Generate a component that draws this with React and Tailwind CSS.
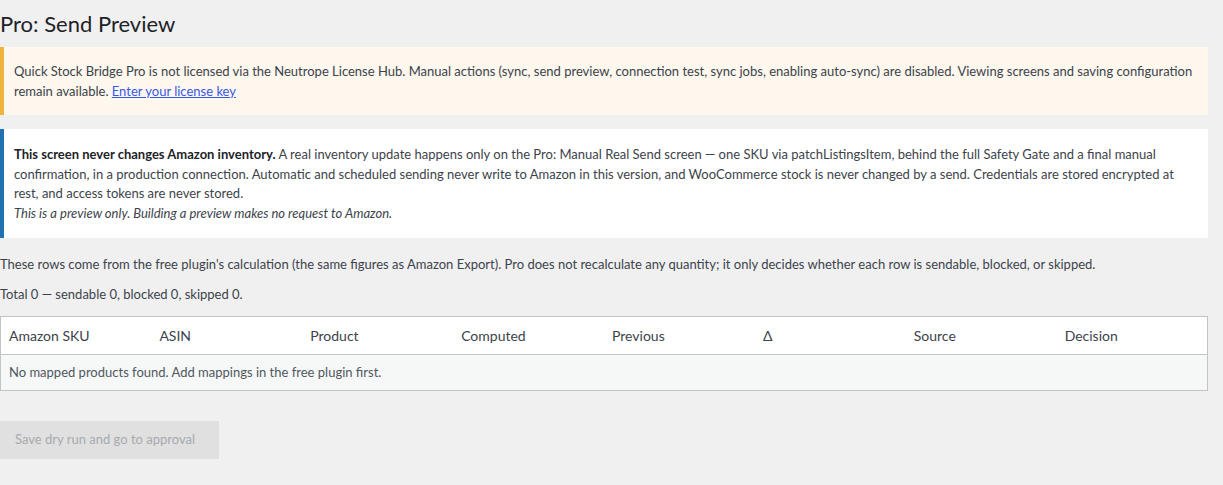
export default function App() {
  const cols = ["Amazon SKU", "ASIN", "Product", "Computed", "Previous", "Δ", "Source", "Decision"];
  return (
    <div className="min-h-[485px] bg-[#f0f0f1] pr-[15px] text-[13px] text-[#3c434a] font-['Lato',sans-serif]">
      <h1 className="pt-[9px] pb-[4px] text-[22px] leading-[30px] font-normal text-[#1d2327]">Pro: Send Preview</h1>

      <div className="mt-[4px] border-l-4 border-[#efb43f] bg-[#fdf7ee] pl-[10px] pr-[12px] pt-[15px] pb-[14px] leading-[19.5px]">
        <p>
          Quick Stock Bridge Pro is not licensed via the Neutrope License Hub. Manual actions (sync, send preview, connection test, sync jobs, enabling auto-sync) are disabled. Viewing screens and saving configuration remain available.{" "}
          <a href="#" className="text-[#3858e9] underline">Enter your license key</a>
        </p>
      </div>

      <div className="mt-[14px] border-l-4 border-[#2271b1] bg-white pl-[10px] pr-[12px] pt-[16px] pb-[15px] leading-[19.5px]">
        <p>
          <strong className="font-bold text-[#1d2327]">This screen never changes Amazon inventory.</strong>{" "}
          A real inventory update happens only on the Pro: Manual Real Send screen — one SKU via patchListingsItem, behind the full Safety Gate and a final manual confirmation, in a production connection. Automatic and scheduled sending never write to Amazon in this version, and WooCommerce stock is never changed by a send. Credentials are stored encrypted at rest, and access tokens are never stored.
        </p>
        <p className="italic">This is a preview only. Building a preview makes no request to Amazon.</p>
      </div>

      <p className="mt-[17px] leading-[19.5px]">
        These rows come from the free plugin's calculation (the same figures as Amazon Export). Pro does not recalculate any quantity; it only decides whether each row is sendable, blocked, or skipped.
      </p>
      <p className="mt-[10px] leading-[19.5px]">Total 0 — sendable 0, blocked 0, skipped 0.</p>

      <table className="mt-[12px] w-full table-fixed border border-[#c3c4c7] border-collapse bg-white">
        <thead>
          <tr className="border-b border-[#c3c4c7]">
            {cols.map((c) => (
              <th key={c} className="h-[38px] px-2 text-left text-[14px] font-normal text-[#3c434a]">{c}</th>
            ))}
          </tr>
        </thead>
        <tbody>
          <tr className="bg-[#f6f7f7]">
            <td colSpan={8} className="h-[36px] px-2 text-[#50575e]">No mapped products found. Add mappings in the free plugin first.</td>
          </tr>
        </tbody>
      </table>

      <div className="mt-[30px]">
        <button disabled className="h-[38px] w-[219px] bg-[#e0e0e1] px-[15px] text-left text-[13px] text-[#a7aaad]">
          Save dry run and go to approval
        </button>
      </div>
    </div>
  );
}
